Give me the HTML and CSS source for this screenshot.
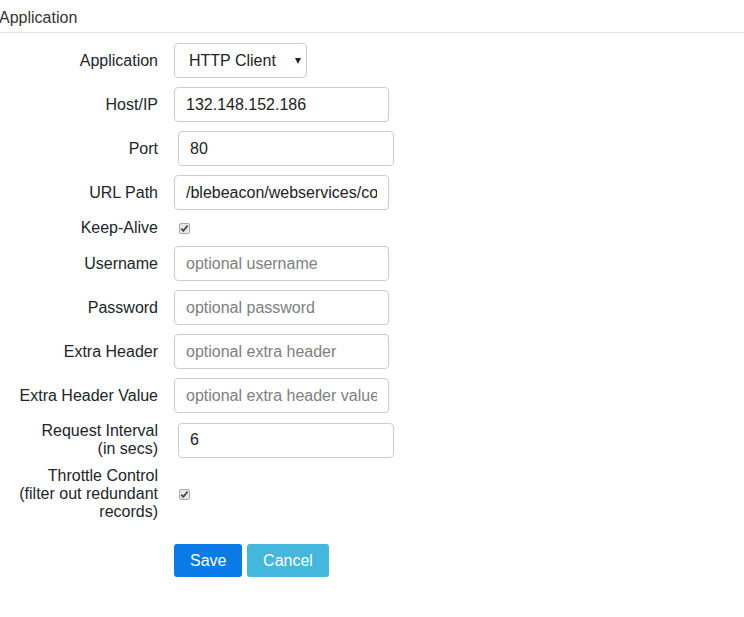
FILE: index.html
```html
<!DOCTYPE html>
<html>
<head>
<meta charset="utf-8">
<link rel="stylesheet" href="styles.css">
</head>
<body>
<div class="panel-title">Application</div>
<form class="form">
  <label class="lbl">Application</label>
  <div class="ctl">
    <div class="select-wrap">
      <select class="select"><option>HTTP Client</option></select>
    </div>
  </div>

  <label class="lbl">Host/IP</label>
  <div class="ctl"><input class="input" type="text" value="132.148.152.186"></div>

  <label class="lbl">Port</label>
  <div class="ctl"><input class="input shifted" type="text" value="80"></div>

  <label class="lbl">URL Path</label>
  <div class="ctl"><input class="input" type="text" value="/blebeacon/webservices/com.rayleigh.beacon/scanner"></div>

  <label class="lbl">Keep-Alive</label>
  <div class="ctl"><span class="check"><svg viewBox="0 0 11 11" width="11" height="11"><path d="M2.3 5.6 L4.3 7.8 L8.6 2.6" fill="none" stroke="#4a4a4a" stroke-width="1.8"/></svg></span></div>

  <label class="lbl">Username</label>
  <div class="ctl"><input class="input" type="text" placeholder="optional username"></div>

  <label class="lbl">Password</label>
  <div class="ctl"><input class="input" type="password" placeholder="optional password"></div>

  <label class="lbl">Extra Header</label>
  <div class="ctl"><input class="input" type="text" placeholder="optional extra header"></div>

  <label class="lbl">Extra Header Value</label>
  <div class="ctl"><input class="input" type="text" placeholder="optional extra header value"></div>

  <label class="lbl">Request Interval<br>(in secs)</label>
  <div class="ctl"><input class="input shifted" type="text" value="6"></div>

  <label class="lbl">Throttle Control<br>(filter out redundant<br>records)</label>
  <div class="ctl"><span class="check"><svg viewBox="0 0 11 11" width="11" height="11"><path d="M2.3 5.6 L4.3 7.8 L8.6 2.6" fill="none" stroke="#4a4a4a" stroke-width="1.8"/></svg></span></div>

  <div class="spacer"></div>
  <div class="ctl buttons">
    <button type="button" class="btn btn-save">Save</button>
    <button type="button" class="btn btn-cancel">Cancel</button>
  </div>
</form>
</body>
</html>
```

FILE: styles.css
```css
html, body {
  margin: 0;
  padding: 0;
  background: #fff;
  font-family: "Liberation Sans", Arial, sans-serif;
  font-size: 16px;
  color: #212529;
}

.panel-title {
  height: 33px;
  box-sizing: border-box;
  padding: 9px 0 0 0;
  margin-left: -1px;
  line-height: 18px;
  color: #333;
  border-bottom: 1px solid #e5e5e5;
}

.form {
  display: grid;
  grid-template-columns: 158px 216px;
  column-gap: 16px;
  row-gap: 9px;
  align-items: center;
  margin-top: 10px;
}

.lbl {
  text-align: right;
  line-height: 18px;
  color: #212529;
}

.ctl {
  display: flex;
  align-items: center;
  min-height: 18px;
}

.input {
  box-sizing: border-box;
  width: 215px;
  height: 35px;
  padding: 6px 11px;
  border: 1px solid #ccc;
  border-radius: 4px;
  font-family: "Liberation Sans", Arial, sans-serif;
  font-size: 16px;
  color: #222;
  background: #fff;
  outline: none;
}

.input::placeholder {
  color: #808080;
}

.shifted {
  margin-left: 4px;
  width: 216px;
}

.select-wrap {
  position: relative;
  width: 133px;
  height: 35px;
}

.select {
  appearance: none;
  -webkit-appearance: none;
  box-sizing: border-box;
  width: 133px;
  height: 35px;
  padding: 0 0 0 14px;
  border: 1px solid #ccc;
  border-radius: 4px;
  background: #fff;
  font-family: "Liberation Sans", Arial, sans-serif;
  font-size: 16px;
  color: #222;
}

.select-wrap::after {
  content: "";
  position: absolute;
  right: 6px;
  top: 15px;
  width: 0;
  height: 0;
  border-left: 3px solid transparent;
  border-right: 3px solid transparent;
  border-top: 6px solid #222;
}

.check {
  display: inline-flex;
  box-sizing: border-box;
  width: 11px;
  height: 11px;
  margin-left: 5px;
  border: 1px solid #a8a8a8;
  border-radius: 2px;
  background: #e9e9e9;
  align-items: center;
  justify-content: center;
}

.check svg {
  display: block;
  margin: -1px;
}

.spacer {
  height: 33px;
}

.buttons {
  gap: 5px;
  margin-top: 14px;
}

.btn {
  box-sizing: border-box;
  height: 33px;
  padding: 0 16px;
  border: none;
  border-radius: 3px;
  font-family: "Liberation Sans", Arial, sans-serif;
  font-size: 16px;
  color: #fff;
  cursor: pointer;
}

.btn-save {
  background: #0a7be6;
  width: 68px;
}

.btn-cancel {
  background: #44b7dc;
  width: 82px;
}
```
